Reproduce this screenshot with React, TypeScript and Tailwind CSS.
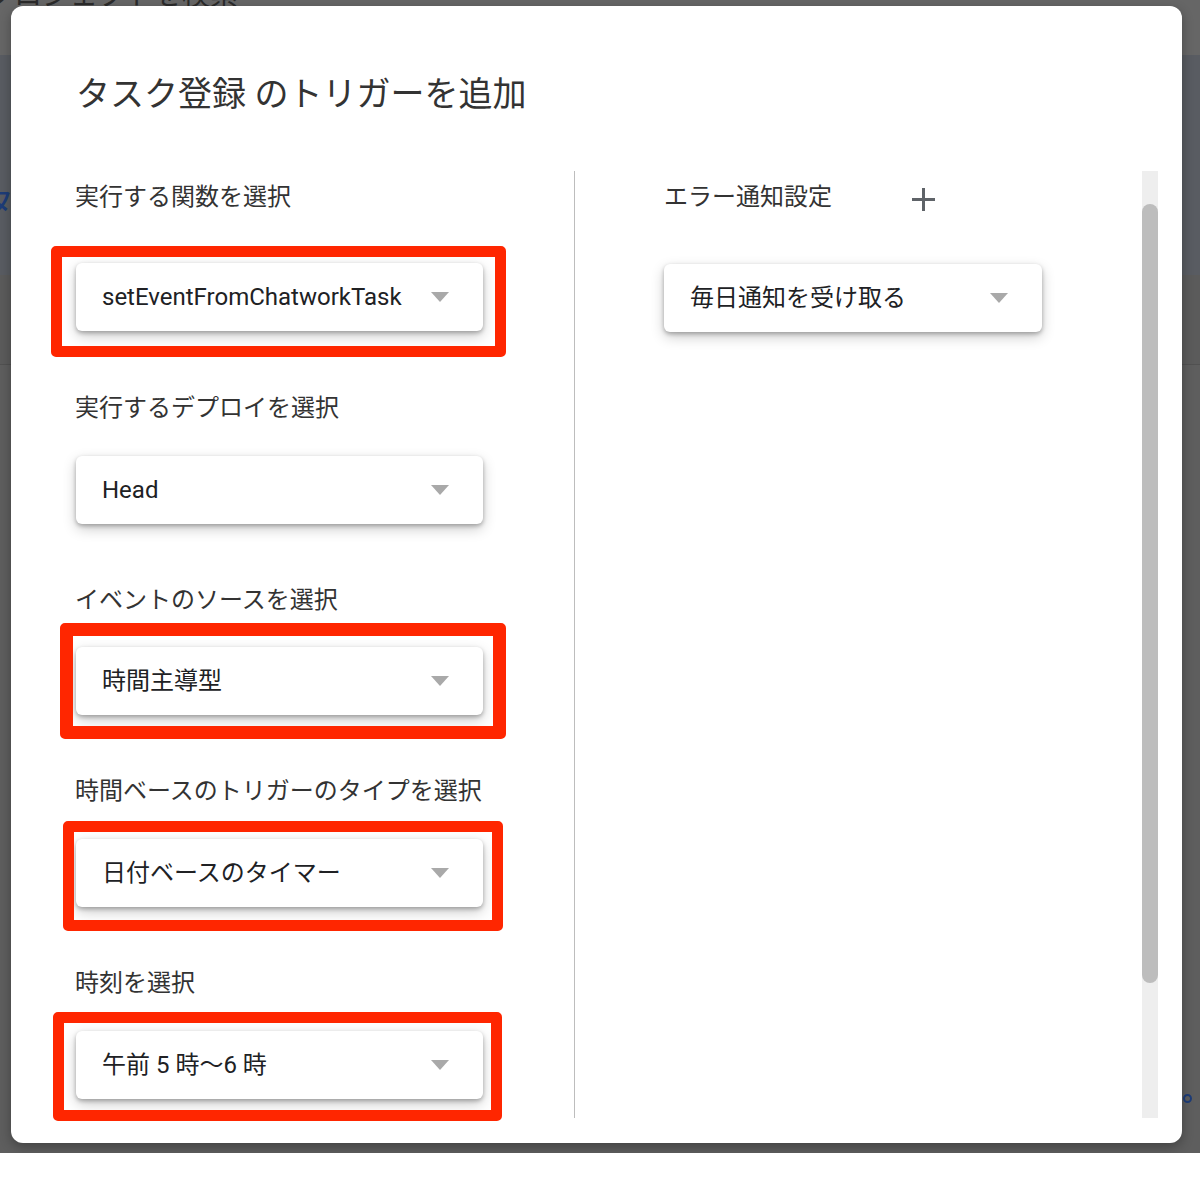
import type { ReactNode } from "react";

const FONT = { fontFamily: 'Roboto, "Noto Sans CJK JP", "Noto Sans", sans-serif' };

function Label({ children, className = "" }: { children: ReactNode; className?: string }) {
  return (
    <div className={`h-[32px] whitespace-nowrap text-[24px] leading-[32px] text-[#333333] ${className}`}>
      {children}
    </div>
  );
}

function Select({ value, wide = true }: { value: string; wide?: boolean }) {
  return (
    <div
      className={`flex h-[68px] items-center justify-between rounded-[6px] bg-white pl-[26px] pr-[34px] shadow-[0_2px_4px_rgba(0,0,0,0.28),0_5px_14px_rgba(0,0,0,0.2)] ${
        wide ? "w-[407px]" : "w-[378px]"
      }`}
    >
      <span className="whitespace-nowrap text-[24px] leading-[32px] text-[#202124]">{value}</span>
      <svg width="18" height="10" viewBox="0 0 18 10" className="shrink-0">
        <path d="M0 0h18L9 10z" fill="#a9a9a9" />
      </svg>
    </div>
  );
}

// red annotation frame drawn over a select
function Marked({ children, frame }: { children: ReactNode; frame: string }) {
  return (
    <div className="relative w-fit">
      {children}
      <div className={`pointer-events-none absolute rounded-[5px] border-[#ff2600] ${frame}`} />
    </div>
  );
}

export default function App() {
  return (
    <div className="flex h-[1194px] w-full flex-col bg-white" style={FONT}>
      {/* dimmed page behind the dialog */}
      <div className="relative flex h-[1153px] flex-col overflow-hidden bg-[#5d5d5d]">
        <div className="h-[55px] bg-[#666666]">
          <div className="ml-[-14px] mt-[-20px] whitespace-nowrap text-[28px] leading-[32px] text-[#2b2b2b]">
            プロジェクトを検索
          </div>
        </div>
        <div className="h-[220px] bg-[#595c62] pt-[128px]">
          <div className="ml-[-20px] text-[34px] leading-[40px] text-[#1d3c78]">タ</div>
        </div>
        <div className="h-[90px] border-b border-[#515151] bg-[#5b5b5b]" />
        <div className="flex-1 bg-[#5e5e5e]" />
        <span className="absolute left-[1183px] top-[1094px] h-[9px] w-[9px] rounded-full border-2 border-[#1d3c78]" />

        {/* dialog */}
        <div className="absolute left-[11px] top-[6px] flex h-[1137px] w-[1171px] flex-col rounded-[12px] bg-white pl-[65px] pr-[24px] pt-[68px] shadow-[0_4px_12px_rgba(0,0,0,0.3)]">
          <h1 className="h-[40px] whitespace-nowrap text-[34px] font-normal leading-[40px] text-[#333333]">
            タスク登録 のトリガーを追加
          </h1>

          <div className="mt-[57px] flex h-[947px]">
            {/* left column */}
            <div className="flex w-[498px] shrink-0 flex-col pt-[10px]">
              <Label className="ml-[-1px]">実行する関数を選択</Label>
              <div className="mt-[50px]">
                <Marked frame="left-[-25px] right-[-23px] top-[-17px] bottom-[-26px] border-[11px]">
                  <Select value="setEventFromChatworkTask" />
                </Marked>
              </div>

              <Label className="ml-[-1px] mt-[61px]">実行するデプロイを選択</Label>
              <div className="mt-[32px]">
                <Select value="Head" />
              </div>

              <Label className="ml-[-1px] mt-[60px]">イベントのソースを選択</Label>
              <div className="mt-[31px]">
                <Marked frame="left-[-16px] right-[-23px] top-[-24px] bottom-[-24px] border-[13px]">
                  <Select value="時間主導型" />
                </Marked>
              </div>

              <Label className="ml-[-1px] mt-[60px]">時間ベースのトリガーのタイプを選択</Label>
              <div className="mt-[32px]">
                <Marked frame="left-[-13px] right-[-20px] top-[-18px] bottom-[-24px] border-[11px]">
                  <Select value="日付ベースのタイマー" />
                </Marked>
              </div>

              <Label className="ml-[-1px] mt-[60px]">時刻を選択</Label>
              <div className="mt-[32px]">
                <Marked frame="left-[-23px] right-[-19px] top-[-19px] bottom-[-22px] border-[11px]">
                  <Select value="午前 5 時〜6 時" />
                </Marked>
              </div>
            </div>

            <div className="w-px shrink-0 bg-[#bdbdbd]" />

            {/* right column */}
            <div className="flex flex-1 flex-col pl-[89px] pt-[10px]">
              <div className="flex items-center">
                <Label>エラー通知設定</Label>
                <svg width="23" height="23" viewBox="0 0 23 23" className="ml-[80px] mt-[4px]">
                  <path d="M11.5 0v23M0 11.5h23" stroke="#5f6368" strokeWidth="3" />
                </svg>
              </div>
              <div className="mt-[51px]">
                <Select value="毎日通知を受け取る" wide={false} />
              </div>
            </div>

            {/* scrollbar */}
            <div className="w-[16px] shrink-0 bg-[#eeeeee]">
              <div className="mt-[33px] h-[779px] rounded-full bg-[#bdbdbd]" />
            </div>
          </div>
        </div>
      </div>
    </div>
  );
}
